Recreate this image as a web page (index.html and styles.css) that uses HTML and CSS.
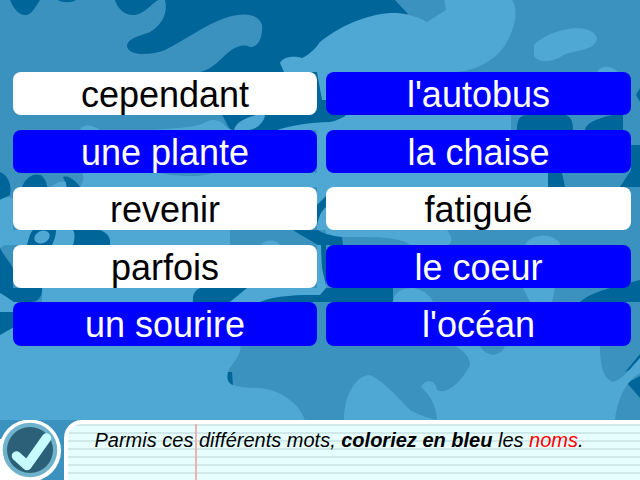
FILE: index.html
```html
<!DOCTYPE html>
<html>
<head>
<title>Parmis ces mots</title>
<meta charset="utf-8" />
<link rel="stylesheet" href="styles.css">
</head>
<body>
<svg class="backdrop" viewBox="0 0 640 480" aria-hidden="true">
  <rect width="640" height="480" fill="#3b92bf"/>
  <!-- dark blots -->
  <g fill="#006699">
    <path d="M10 0C14 10 20 16 27 15C33 13 36 6 40 0Z"/>
    <path d="M58 0C62 3 72 3 76 0Z"/>
    <path d="M115 0C118 10 126 16 135 15C145 13 150 5 158 0Z"/>
    <path d="M165 0C168 12 163 24 150 32C140 36 128 38 127 46C128 56 150 56 165 50C185 40 205 25 225 18C240 13 258 12 262 25C263 38 258 47 250 47C240 42 230 50 220 60C212 68 205 71 200 72L230 130H345L347 60L408 14L395 0Z"/>
    <path d="M0 172C8 175 12 185 10 195L0 200Z"/>
    <path d="M22 187C26 176 36 172 42 176C46 180 47 184 47 187Z"/>
    <path d="M63 177C68 175 75 180 80 187H67C66 183 64 180 63 177Z"/>
    <path d="M0 360C3 366 3 370 0 374Z"/>
    <path d="M0 385C8 382 16 388 19 397C20 408 17 414 20 420H0Z"/>
    <path d="M38 420C40 414 43 408 47 408C52 408 52 412 50 420Z"/>
    <path d="M58 420C61 416 66 418 72 420Z"/>
    <path d="M213 420C212 408 215 397 228 397C240 397 250 410 262 420Z"/>
    <path d="M227 372C225 378 228 384 233 386L232 372Z"/>
    <path d="M517 130C517 122 518 116 526 115H566C571 117 573 122 573 130Z"/>
    <path d="M585 130C586 122 600 118 612 115H623V130Z"/>
    <path d="M631 145H640V187H620L631 170Z"/>
    <path d="M548 173H562L565 187H548Z"/>
    <path d="M580 302C590 292 620 285 640 280V302Z"/>
    <path d="M625 372L640 354V365Z"/>
    <path d="M627 383L640 376V398Z"/>
    <path d="M636 95L640 88V102Z"/>
  </g>
  <!-- light blots -->
  <g fill="#4fa8d3">
    <path d="M280 63C284 56 295 56 302 58C310 54 316 48 320 42C345 22 375 12 397 13C410 14 420 18 427 22L446 10C445 5 444 2 445 0H512C518 8 517 25 505 45C495 62 470 72 455 72L511 115V130H277C290 126 310 122 330 122C336 121 342 118 347 115L340 100H322L317 72H284Z"/>
    <path d="M326 130H548V230H326Z"/>
    <path d="M534 45C548 30 590 20 597 38C596 52 570 50 562 56C552 62 540 64 534 56Z"/>
    <path d="M597 72C600 66 610 64 618 72Z"/>
    <path d="M153 130C175 128 195 128 206 122C212 118 222 120 226 127L232 130Z"/>
    <path d="M234 130C236 122 245 118 256 115H265C264 122 258 128 250 130Z"/>
    <path d="M80 130C82 124 92 124 100 130Z"/>
    <path d="M317 130H326V196L317 205Z"/>
    <path d="M50 187C54 184 62 180 66 182V187Z"/>
    <path d="M80 187C84 180 84 176 82 173H160C175 176 200 178 213 173H326V187Z"/>
    <path d="M0 200C5 196 13 197 13 199V240L0 248Z"/>
    <path d="M0 230H230V245H0Z"/>
    <path d="M317 225C319 215 322 210 326 207V230H317Z"/>
    <path d="M261 245C264 239 276 239 280 245Z"/>
    <path d="M326 230H447C455 240 450 245 447 245H410C400 236 370 237 342 237L326 236Z"/>
    <path d="M525 245C528 238 540 234 548 236C556 238 560 242 560 245Z"/>
    <path d="M317 245H321L322 268L326 285V288H317Z"/>
    <path d="M42 288H326V302H42Z"/>
    <path d="M393 302C394 292 402 288 412 288C422 289 430 295 433 302Z"/>
    <path d="M523 288H555L552 302H530Z"/>
    <path d="M0 293L36 302V312H0Z"/>
    <path d="M40 312V345H0V335Z"/>
    <path d="M0 345H240C243 355 230 365 228 372C225 385 232 388 260 388C282 390 300 405 305 420H0Z"/>
    <path d="M344 420C344 395 356 375 370 375C385 382 398 398 410 410C420 416 430 418 437 420Z"/>
    <path d="M437 420C436 405 430 395 421 387C425 378 436 380 437 390C445 395 460 385 470 365C470 356 462 350 455 346H480C486 357 500 358 505 346H600C600 362 602 378 613 382C625 378 632 366 640 358V373C628 380 618 395 615 420Z"/>
  </g>
  <!-- dark over the light bands -->
  <g fill="#006699">
    <path d="M0 248C5 258 13 265 13 270V288H42C43 296 38 302 32 302H14C8 298 4 295 0 293Z"/>
    <path d="M0 312H40L0 335Z"/>
    <path d="M27 245C29 238 30 233 33 230H56C56 236 54 240 52 245Z"/>
    <path d="M73 245C75 238 75 233 73 230H100C108 233 111 238 110 245Z"/>
    <path d="M193 302C192 295 195 290 200 288H247L230 302Z"/>
    <path d="M260 302C275 295 300 295 320 295L326 288H393V302Z"/>
    <path d="M326 196L317 205V225C319 215 322 210 326 207Z"/>
    <path d="M321 245H326V285L322 268Z"/>
  </g>
  <g fill="#3b92bf">
    <path d="M230 230H293L318 245H230Z"/>
    <path d="M0 0Z"/>
  </g>
  <path d="M293 230C300 235 310 240 318 245H343L342 237C330 236 320 232 318 230Z" fill="#006699"/>
  <path d="M261 245C264 239 276 239 280 245Z" fill="#4fa8d3"/>
  <ellipse cx="42" cy="237" rx="8" ry="6" fill="#4fa8d3" transform="rotate(-25 42 237)"/>
</svg>

<main class="board">
  <div class="word">cependant</div>
  <div class="word picked">l'autobus</div>
  <div class="word picked">une plante</div>
  <div class="word picked">la chaise</div>
  <div class="word">revenir</div>
  <div class="word">fatigué</div>
  <div class="word">parfois</div>
  <div class="word picked">le coeur</div>
  <div class="word picked">un sourire</div>
  <div class="word picked">l'océan</div>
</main>

<footer class="foot">
  <div class="check-wrap">
    <svg class="check" viewBox="0 0 64 60" aria-hidden="true">
      <path d="M0 19H30V60H0Z" fill="#fff"/>
      <circle cx="30" cy="30.5" r="31" fill="#fff"/>
      <circle cx="30" cy="30" r="27.3" fill="#6fb3cb"/>
      <circle cx="30" cy="30" r="23" fill="#2b6078"/>
      <path d="M16.5 36L27 45.5L46.5 18" fill="none" stroke="#c6fcff" stroke-width="9.5" stroke-linecap="round" stroke-linejoin="round"/>
    </svg>
  </div>
  <div class="note">
    <p>Parmis ces différents mots, <b>coloriez en bleu</b> les <span class="red">noms</span>.</p>
  </div>
</footer>
</body>
</html>
```

FILE: styles.css
```css
html, body {
  margin: 0;
  padding: 0;
}

body {
  width: 640px;
  height: 480px;
  position: relative;
  overflow: hidden;
  display: flex;
  flex-direction: column;
  font-family: "Liberation Sans", Arial, sans-serif;
  background: #3b92bf;
}

.backdrop {
  position: absolute;
  top: 0;
  left: 0;
  width: 640px;
  height: 480px;
}

.board {
  position: relative;
  display: grid;
  grid-template-columns: 304px 305px;
  grid-auto-rows: 43.32px;
  column-gap: 9px;
  row-gap: 14.25px;
  padding: 72px 0 0 13px;
}

.word {
  background: #fff;
  color: #000;
  border-radius: 8px;
  font-size: 36px;
  line-height: 45px;
  text-align: center;
}

.word.picked {
  background: #00f;
  color: #fff;
}

.foot {
  position: relative;
  margin-top: auto;
  height: 60px;
  display: flex;
}

.check-wrap {
  width: 64px;
  flex: none;
}

.check {
  display: block;
  width: 64px;
  height: 60px;
  overflow: hidden;
}

.note {
  flex: 1;
  position: relative;
  box-sizing: border-box;
  border-top: 4px solid #fff;
  border-left: 4px solid #fff;
  border-top-left-radius: 18px;
  background-color: #e8ffff;
  background-image: repeating-linear-gradient(to bottom, #cfe9ea 0, #cfe9ea 2px, transparent 2px, transparent 8px);
}

.note::before {
  content: "";
  position: absolute;
  top: 0;
  bottom: 0;
  left: 127px;
  width: 2px;
  background: #f2aeb0;
}

.note p {
  position: relative;
  margin: 0;
  padding: 4px 0 0 26.5px;
  font-size: 20px;
  line-height: 24px;
  font-style: italic;
  color: #000;
}

.red {
  color: #f00;
}
```
